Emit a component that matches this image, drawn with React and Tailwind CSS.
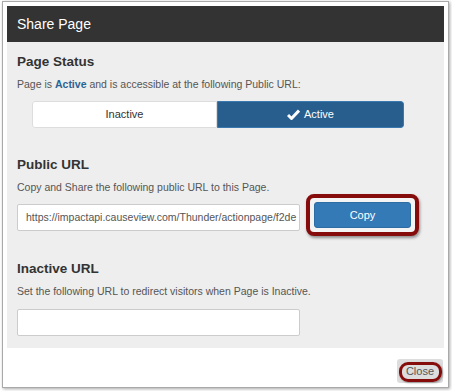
import React from "react";

const font = { fontFamily: '"Liberation Sans", Arial, sans-serif' };

const Section = ({ title, note, children }) => (
  <div>
    <h3 className="text-[13.5px] font-bold text-[#333] leading-[17px]">{title}</h3>
    <p className="mt-[7px] text-[10.5px] text-[#555] leading-[14px]">{note}</p>
    {children}
  </div>
);

const App = () => {
  return (
    <div className="w-[452px] h-[391px] bg-white pt-[1px] pl-[2px]" style={font}>
      {/* modal frame */}
      <div className="w-[447px] h-[387px] border border-[#a9a9a9] bg-white pt-[4px] px-[4px] shadow-[1px_1px_3px_rgba(0,0,0,0.35)] flex flex-col">
        <div className="h-[36px] bg-[#333] flex items-center px-[10px]">
          <span className="text-white text-[14px]">Share Page</span>
        </div>

        <div className="h-[306px] bg-[#eee] px-[10px] pt-[11px] flex flex-col">
          <Section
            title="Page Status"
            note={
              <>
                Page is <span className="font-bold text-[#2a6496]">Active</span> and is
                accessible at the following Public URL:
              </>
            }
          >
            {/* active / inactive toggle */}
            <div className="mt-[10px] ml-[15px] w-[372px] h-[27px] flex rounded-[3px] overflow-hidden text-[11px]">
              <div className="w-[185px] bg-white border border-[#ddd] rounded-l-[3px] flex items-center justify-center text-[#333]">
                Inactive
              </div>
              <div className="flex-1 bg-[#285e8e] border border-[#3c78b0] rounded-r-[3px] flex items-center justify-center text-white gap-[4px]">
                <svg width="13" height="11" viewBox="0 0 13 11">
                  <path d="M1 6l3.5 3.5L12 1.5" fill="none" stroke="#fff" strokeWidth="3" strokeLinejoin="round" />
                </svg>
                Active
              </div>
            </div>
          </Section>

          <div className="mt-[28px]">
            <Section title="Public URL" note="Copy and Share the following public URL to this Page.">
              <div className="flex items-center">
                <div className="mt-[5px] w-[283px] h-[27px] bg-white border border-[#ccc] rounded-[2px] flex items-center px-[8px] text-[10.5px] text-[#555] overflow-hidden whitespace-nowrap">
                  https://impactapi.causeview.com/Thunder/actionpage/f2de
                </div>
                <div className="ml-[6px] border-[4px] border-[#860c0c] rounded-[8px] p-[4px] bg-[#f4f4f4] shadow-[1px_2px_3px_rgba(0,0,0,0.4)]">
                  <div className="w-[97px] h-[26px] bg-[#337ab7] border border-[#2e6da4] rounded-[3px] flex items-center justify-center text-white text-[11px]">
                    Copy
                  </div>
                </div>
              </div>
            </Section>
          </div>

          <div className="mt-[24px]">
            <Section title="Inactive URL" note="Set the following URL to redirect visitors when Page is Inactive.">
              <div className="mt-[11px] w-[283px] h-[27px] bg-white border border-[#ccc] rounded-[2px]" />
            </Section>
          </div>
        </div>

        {/* footer */}
        <div className="flex-1 flex justify-end items-start pt-[11px] pr-[1px]">
          <div className="relative w-[46px] h-[24px] bg-[#ddd] rounded-[3px] flex items-center justify-end pr-[9px] text-[11px] text-[#555]">
            Close
            <div className="absolute left-[2px] top-[3px] w-[43px] h-[20px] border-[3px] border-[#860c0c] rounded-[9px] shadow-[1px_1px_2px_rgba(0,0,0,0.35)]" />
          </div>
        </div>
      </div>
    </div>
  );
};

export default App;
